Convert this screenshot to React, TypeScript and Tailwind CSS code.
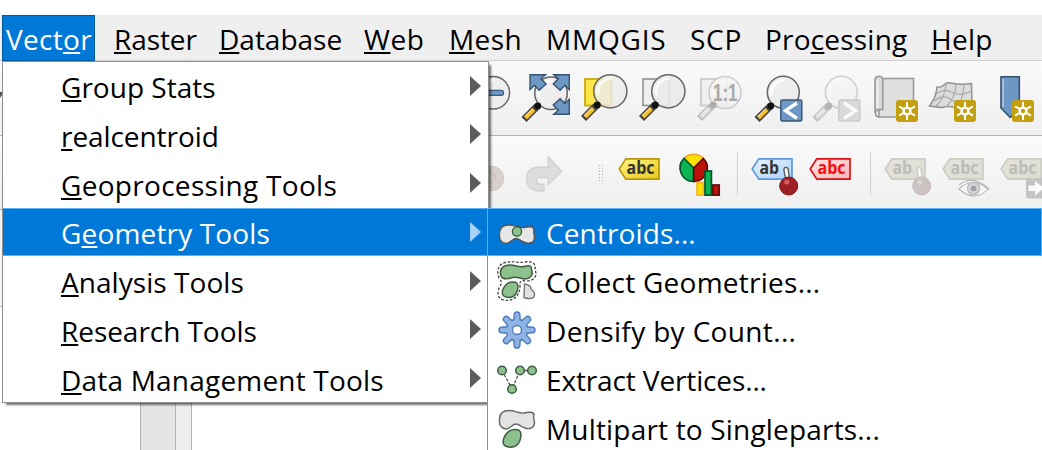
import type { ReactNode } from "react";

const FONT = "font-['Open_Sans','Noto_Sans',sans-serif]";

/** Renders a label with its mnemonic letter underlined. */
function Label({ text, mnemonic = -1 }: { text: string; mnemonic?: number }) {
  if (mnemonic < 0) return <>{text}</>;
  return (
    <>
      {text.slice(0, mnemonic)}
      <span className="underline decoration-2 underline-offset-[2px] [text-decoration-skip-ink:none]">{text[mnemonic]}</span>
      {text.slice(mnemonic + 1)}
    </>
  );
}

function Icon({ children }: { children: ReactNode }) {
  return (
    <svg viewBox="0 0 48 48" className="h-12 w-12 shrink-0 overflow-visible">
      {children}
    </svg>
  );
}

function Handle({ dx = 0, dy = 0 }: { dx?: number; dy?: number }) {
  return (
    <g transform={`translate(${dx} ${dy})`}>
      <path d="M17 31 3.5 44.5" stroke="#424242" strokeWidth="7" fill="none" />
      <path d="M13.5 34.5 5 43" stroke="#f3bd2d" strokeWidth="4" fill="none" />
      <path d="M12.2 33.8 4.4 41.6" stroke="#ffe384" strokeWidth="1.2" fill="none" />
      <circle cx="17.3" cy="31" r="3.4" fill="#111" />
    </g>
  );
}

function Lens({ cx, cy, r, opacity = 0.82 }: { cx: number; cy: number; r: number; opacity?: number }) {
  return (
    <g>
      <circle cx={cx} cy={cy} r={r} fill="#ebebeb" fillOpacity={opacity} stroke="#666" strokeWidth="1.5" />
      <path
        d={`M${cx - r * 0.72} ${cy + r * 0.15}A${r * 0.75} ${r * 0.75} 0 0 1 ${cx} ${cy - r * 0.75}`}
        stroke="#fff"
        strokeWidth="3"
        strokeLinecap="round"
        fill="none"
        opacity=".75"
      />
    </g>
  );
}

function ZoomOut() {
  return (
    <Icon>
      <Lens cx={29.3} cy={18.7} r={16.3} />
      <rect x="19" y="16.3" width="20.5" height="5" rx="2" fill="#6d97c4" stroke="#3a5a80" strokeWidth="1.2" />
    </Icon>
  );
}

function ZoomFull() {
  const arrow = "M.8 .8H17.5L12.6 5.2 18 10.8 10.6 17.4 5.5 12.2.8 16.8Z";
  return (
    <Icon>
      <Lens cx={29} cy={19.3} r={16.3} />
      <Handle dx={-1.5} dy={1} />
      <g fill="#6d97c4" stroke="#35526f" strokeWidth="1.5">
        <path d={arrow} transform="translate(7.3 0) scale(.93)" />
        <path d={arrow} transform="translate(48 0) scale(-.93 .93)" />
        <path d={arrow} transform="translate(48 41) scale(-.93 -.93)" />
      </g>
    </Icon>
  );
}

function ZoomSelection() {
  return (
    <Icon>
      <rect x="5" y="5" width="26.5" height="26.5" fill="#fce74a" stroke="#cca70e" strokeWidth="1.8" />
      <Lens cx={30.3} cy={17.3} r={16.6} />
      <Handle />
    </Icon>
  );
}

function ZoomLayer() {
  return (
    <Icon>
      <rect x="5" y="5" width="26.5" height="26.5" fill="#efefef" stroke="#8c8c8c" strokeWidth="1.5" />
      <Lens cx={30.3} cy={17.3} r={16.6} opacity={0.88} />
      <Handle />
    </Icon>
  );
}

function ZoomNative() {
  return (
    <Icon>
      <g opacity=".3" className="grayscale">
        <rect x="5" y="5" width="26.5" height="26.5" fill="#e4e4e4" stroke="#777" strokeWidth="2" />
        <Lens cx={29} cy={18.6} r={16} />
        <Handle />
      </g>
      <text x="17" y="27" textLength="24.5" lengthAdjust="spacingAndGlyphs" fontSize="23" fontWeight="700" fill="#a9a9a9" className="font-['Liberation_Sans',sans-serif]">
        1:1
      </text>
    </Icon>
  );
}

function ZoomLast() {
  return (
    <Icon>
      <Lens cx={29.3} cy={18.3} r={16} />
      <Handle dx={-0.5} dy={1} />
      <rect x="26.8" y="26" width="21" height="21" rx="1.5" fill="#6d97c4" stroke="#3d5872" strokeWidth="1.5" />
      <path d="M43 29 31.5 36.7 43 44.4" fill="none" stroke="#fff" strokeWidth="3.4" />
    </Icon>
  );
}

function ZoomNext() {
  return (
    <Icon>
      <g opacity=".27" className="grayscale">
        <Lens cx={29.3} cy={18.3} r={16} />
        <Handle dx={-0.5} dy={1} />
      </g>
      <rect x="26.8" y="26" width="21" height="21" rx="1.5" fill="#d9d9d9" stroke="#cacaca" strokeWidth="1.5" />
      <path d="M32 29 43.5 36.7 32 44.4" fill="none" stroke="#fafafa" strokeWidth="3.4" />
    </Icon>
  );
}

function NewBadge() {
  return (
    <g>
      <rect x="26" y="26" width="22" height="22" rx="3" fill="#c3a010" />
      <path d="M37 28.7V45.3M29.8 32.8 44.2 41.2M44.2 32.8 29.8 41.2" stroke="#fff" strokeWidth="2" strokeLinecap="round" />
      <circle cx="37" cy="37" r="4.6" fill="#fff" />
      <circle cx="37" cy="37" r="2.2" fill="#c3a010" />
    </g>
  );
}

function NewMapView() {
  return (
    <Icon>
      <path d="M11 4.5H43.5V43H9V38Z" fill="#e0e0e0" stroke="#999" strokeWidth="1.6" />
      <path d="M5 39V6Q5 2.3 9 2.3 12.8 2.3 12.8 6V35.5Q5.5 34.5 5.5 39.5 5.5 43 10 43" fill="#d9d9d9" stroke="#999" strokeWidth="1.6" />
      <path d="M7.5 34V6.5" stroke="#f4f4f4" strokeWidth="1.6" />
      <NewBadge />
    </Icon>
  );
}

function New3DView() {
  return (
    <Icon>
      <path d="M9 13Q13 14 17 10 20 8 24 9.3 33 11 43.5 9.5L44 36Q38 38 30 35 22 31 14 33.5 8 33 1.5 32 8 24 9 13Z" fill="#dcdcdc" stroke="#929292" strokeWidth="1.5" />
      <path d="M18 10Q17 24 8 32M28 10Q28 23 18 33M36 10Q36 22 29 35M8 20Q17 14 23 18 31 23 44 17M6 27Q15 20 22 25 31 31 44 26" fill="none" stroke="#a7a7a7" strokeWidth="1.1" />
      <NewBadge />
    </Icon>
  );
}

function NewBookmark() {
  return (
    <Icon>
      <path d="M15 2.8H33.3V36L24.2 43.5 15 34Z" fill="#6d97c4" stroke="#35526f" strokeWidth="1.6" />
      <path d="M17 5V33" stroke="#b5cfeb" strokeWidth="1.6" />
      <NewBadge />
    </Icon>
  );
}

function Redo() {
  return (
    <Icon>
      <path d="M28.2 5.5 41.5 20.5 28.2 33.5V26.5H20Q16.5 26.5 16.5 29.5 16.5 33 21.5 33.3H24V40H19Q6.5 39 6.5 27 7 17 18 16.3H28.2Z" fill="#dcdedd" stroke="#d0d2d1" strokeWidth="1.4" strokeLinejoin="round" />
    </Icon>
  );
}

function Undo() {
  return (
    <Icon>
      <circle cx="29.5" cy="27.5" r="12.3" fill="#d9d1ce" stroke="#d0c8c5" />
      <circle cx="28.5" cy="27" r="5" fill="none" stroke="#cdc4c1" strokeWidth="1.3" />
    </Icon>
  );
}

type TagProps = { fill: string; light: string; stroke: string; ink: string; text?: string; id: string };

function Tag({ fill, light, stroke, ink, text = "abc", id }: TagProps) {
  return (
    <g>
      <defs>
        <linearGradient id={id} x1="0" y1="0" x2="1" y2="1">
          <stop offset="0" stopColor={light} />
          <stop offset="1" stopColor={fill} />
        </linearGradient>
      </defs>
      <path d="M4.2 18 10.8 7.8H44V28.2H10.8Z" fill={`url(#${id})`} stroke={stroke} strokeWidth="1.7" />
      <text x="11.5" y="23.4" textLength={text.length === 3 ? 28 : 19.5} lengthAdjust="spacingAndGlyphs" fontSize="17" fontWeight="700" fill={ink} className="font-['Open_Sans',sans-serif]">
        {text}
      </text>
    </g>
  );
}

const MUTED_TAG = { fill: "#dcdcd3", light: "#e4e4dc", stroke: "#ccccc2", ink: "#bcbcb8" };

function Pin({ muted = false }: { muted?: boolean }) {
  return (
    <g>
      <path d="M36 20Q35.6 16.3 38 16.3 40 16.3 40.3 19L41.3 27H37.5Z" fill="#f7f7f7" stroke={muted ? "#c8c8c8" : "#555"} strokeWidth="1.3" />
      <circle cx="40.7" cy="35" r="9" fill={muted ? "#cdc3c3" : "#9f2024"} stroke={muted ? "#c5bbbb" : "#7d1518"} />
      <circle cx="38.8" cy="31" r="2.6" fill={muted ? "#ddd5d5" : "#d65b5b"} />
    </g>
  );
}

function Diagram() {
  return (
    <Icon>
      <g strokeWidth="1.7">
        <path d="M20.7 17 11 7.3A13.6 13.6 0 0 1 30.4 7.3Z" fill="#ffdf00" stroke="#f3a51b" />
        <path d="M20.7 17V30.5A13.5 13.5 0 0 1 11 7.5Z" fill="#0ab353" stroke="#06512a" />
        <path d="M20.7 17V30.5A13.5 13.5 0 0 0 30.4 7.5Z" fill="#bd1209" stroke="#630a08" />
        <rect x="24" y="31.5" width="6.5" height="12.6" fill="#ffdf00" stroke="#f8b52c" />
        <rect x="39.8" y="34" width="6.4" height="10.1" fill="#bd1209" stroke="#630a08" />
        <rect x="32" y="20" width="6.4" height="24.1" fill="#0ab353" stroke="#06512a" />
      </g>
    </Icon>
  );
}

function EyeMark() {
  return (
    <g fill="none" stroke="#b5b5b5" strokeWidth="1.1">
      <path d="M20 38Q33 25 49 38 36 52 20 38Z" fill="#f5f5f5" />
      <path d="M20 34Q34 23 50.5 38.5" />
      <circle cx="34.5" cy="37.5" r="6" fill="#d2d4d8" />
      <circle cx="34.5" cy="37.5" r="2.7" fill="#9b9da3" stroke="none" />
    </g>
  );
}

function MoveMark() {
  return (
    <g>
      <rect x="29" y="27" width="21" height="20.5" rx="2.5" fill="#c4c4c4" />
      <path d="M31.5 34.5H38V30L47 37.2 38 44.5V40H31.5Z" fill="#fafafa" />
    </g>
  );
}

const Separator = () => <div className="-mt-[4px] h-[43px] w-px shrink-0 bg-[#cfcfcf]" />;

function Grip() {
  return (
    <div className="-mt-[4px] grid shrink-0 grid-cols-2 gap-x-[2px] gap-y-[2px]">
      {Array.from({ length: 12 }, (_, i) => (
        <div key={i} className="h-px w-px bg-[#b0b0b0]" />
      ))}
    </div>
  );
}

const BLOB =
  "M2.5 20C3 14 6 12 12 12 18 12 22 15.5 27 14.5 31 13.5 37 13 37 16.5 36 19 37.5 21 37.5 25 37 30 32 31 28 29.5 24 28.5 22 25.5 19.5 25.5 15 25.5 14 30 9 30.5 3 30 2 25 2.5 20Z";

function SubIcon({ children }: { children: ReactNode }) {
  return (
    <svg viewBox="0 0 40 40" className="mr-[9px] h-10 w-10 shrink-0 overflow-visible">
      {children}
    </svg>
  );
}

function Centroid() {
  return (
    <SubIcon>
      <path d={BLOB} transform="translate(0 1)" fill="#e6e6e6" stroke="#555" strokeWidth="1.4" />
      <circle cx="20" cy="19.5" r="4.6" fill="#8cc08c" stroke="#355a37" strokeWidth="1.3" />
    </SubIcon>
  );
}

const LOBE = "M13 21C20 20 22 22 21 28 20 35 15 38 10 37 3 36 4 31 6 27 8 24 9 22 13 21Z";

function Collect() {
  return (
    <SubIcon>
      <path d="M2 17C-1 9 2 3 8 1.5 17-.5 21 2.5 28 1 37-.5 39 4 38 9 41 15 37 20 29 20 22 19 23 21 23 27 22 36 15 41 7 39 0 38 .5 32 2 27 6 21 4 20 2 17Z" fill="none" stroke="#444" strokeWidth="1.3" strokeDasharray="2.6 1.7" />
      <path d="M3.5 11C4 5 8 4 13 4 19 4 21 7 27 5.5 33 4 35 5 34.5 9 37 14 33 18 27 18 22 16.5 17 15 14 17 7 19 3 17 3.5 11Z" fill="#8cc08c" stroke="#3f5c42" strokeWidth="1.5" />
      <path d={LOBE} transform="translate(1 1.5) scale(.94)" fill="#8cc08c" stroke="#3f5c42" strokeWidth="1.5" />
      <path d="M27.5 23Q34 24 34 28 39 32 37 36 34 39 27 36.5Z" fill="#e1e1e1" stroke="#777" strokeWidth="1.4" />
    </SubIcon>
  );
}

function Gear() {
  const teeth = [0, 45, 90, 135, 180, 225, 270, 315];
  const tooth = "M16.8 11 17.2 4Q17.6 2 20 2 22.4 2 22.8 4L23.2 11";
  return (
    <SubIcon>
      <g fill="#8fb4e3" stroke="#4a7abb" strokeWidth="1.4">
        <circle cx="20" cy="20" r="10.8" />
        {teeth.map((a) => (
          <path key={a} d={tooth} transform={`rotate(${a} 20 20)`} />
        ))}
      </g>
      <circle cx="20" cy="20" r="10" fill="#8fb4e3" />
      <circle cx="20" cy="20" r="4.5" fill="#fff" stroke="#4a7abb" strokeWidth="1.3" />
    </SubIcon>
  );
}

function Vertices() {
  return (
    <SubIcon>
      <path d="M5 11.5 15 30 23 11.5H35" fill="none" stroke="#555" strokeWidth="1.3" strokeDasharray="3 1.6" />
      <g fill="#8cc08c" stroke="#3f5c42" strokeWidth="1.5">
        <circle cx="5" cy="11.5" r="4.3" />
        <circle cx="23" cy="11.5" r="4.3" />
        <circle cx="35" cy="11.5" r="4.3" />
        <circle cx="15" cy="30" r="4.3" />
      </g>
    </SubIcon>
  );
}

function Multipart() {
  return (
    <SubIcon>
      <path d={BLOB} transform="translate(0 -9.5)" fill="#e3e3e3" stroke="#666" strokeWidth="1.4" />
      <path d={LOBE} transform="translate(1.2 -.6) scale(1.07)" fill="#8cc08c" stroke="#3f5c42" strokeWidth="1.4" />
    </SubIcon>
  );
}

const MENU_BAR = [
  { text: "Raster", mnemonic: 0, box: "w-[105px]", type: "tracking-[-0.1px]" },
  { text: "Database", mnemonic: 0, box: "w-[145px]", type: "tracking-normal" },
  { text: "Web", mnemonic: 0, box: "w-[85px]", type: "tracking-[0.6px]" },
  { text: "Mesh", mnemonic: 0, box: "w-[97px]", type: "tracking-[0.4px]" },
  { text: "MMQGIS", mnemonic: -1, box: "w-[144px]", type: "tracking-[0.8px]" },
  { text: "SCP", mnemonic: -1, box: "w-[75px]", type: "tracking-[0.7px]" },
  { text: "Processing", mnemonic: 3, box: "w-[166px]", type: "tracking-[0.2px]" },
  { text: "Help", mnemonic: 0, box: "w-[100px]", type: "tracking-[0.3px]" },
];

const VECTOR_MENU = [
  { text: "Group Stats", mnemonic: 0, type: "tracking-[0.02px]" },
  { text: "realcentroid", mnemonic: 0, type: "tracking-[-0.07px]" },
  { text: "Geoprocessing Tools", mnemonic: 0, type: "tracking-[0.3px]" },
  { text: "Geometry Tools", mnemonic: 1, type: "tracking-[0.16px]", active: true },
  { text: "Analysis Tools", mnemonic: 0, type: "tracking-[0.05px]" },
  { text: "Research Tools", mnemonic: 0, type: "tracking-[-0.05px]" },
  { text: "Data Management Tools", mnemonic: 0, type: "tracking-[0.2px]" },
];

const GEOMETRY_MENU = [
  { text: "Centroids...", icon: <Centroid />, type: "tracking-[0.12px]", active: true },
  { text: "Collect Geometries...", icon: <Collect />, type: "tracking-[0.25px]" },
  { text: "Densify by Count...", icon: <Gear />, type: "tracking-[0.35px]" },
  { text: "Extract Vertices...", icon: <Vertices />, type: "tracking-[-0.13px]" },
  { text: "Multipart to Singleparts...", icon: <Multipart />, type: "tracking-[0.18px]" },
];

export default function App() {
  return (
    <div className={`relative flex h-[450px] w-[1042px] flex-col overflow-hidden bg-white pt-[15px] text-[28px] leading-[32px] whitespace-nowrap text-black ${FONT}`}>
      <nav className="flex h-[46px] shrink-0 border-b border-[#d0d0d0] bg-[#efefef] pl-[2px]">
        <div className="mr-[19px] flex h-[46px] w-[93px] shrink-0 items-center border border-[#005a9e] bg-[#0078d7] pt-[1px] pl-[3px] text-white">
          <span className="tracking-[0.3px]">
            <Label text="Vector" mnemonic={4} />
          </span>
        </div>
        {MENU_BAR.map((m) => (
          <div key={m.text} className={`flex shrink-0 items-center pt-[2px] ${m.box}`}>
            <span className={m.type}>
              <Label text={m.text} mnemonic={m.mnemonic} />
            </span>
          </div>
        ))}
      </nav>

      <div className="flex h-[75px] shrink-0 items-center gap-[10px] border-b border-[#b4b4b4] bg-linear-to-b from-[#fafafa] to-[#efefef] pl-[464px]">
        <ZoomOut />
        <ZoomFull />
        <ZoomSelection />
        <ZoomLayer />
        <ZoomNative />
        <ZoomLast />
        <ZoomNext />
        <NewMapView />
        <New3DView />
        <NewBookmark />
      </div>

      <div className="flex h-[74px] shrink-0 items-center border-b border-[#b4b4b4] bg-linear-to-b from-[#fafafa] to-[#efefef] pt-[5px] pl-[462px]">
        <div className="flex shrink-0 gap-[10px]">
          <Undo />
          <Redo />
        </div>
        <div className="ml-[31px] flex w-[16px] shrink-0">
          <Grip />
        </div>
        <div className="flex shrink-0 items-center gap-[10px]">
          <Icon>
            <Tag id="tag-yellow" light="#fff48a" fill="#e9c916" stroke="#bb970b" ink="#333" />
          </Icon>
          <Diagram />
        </div>
        <div className="ml-[16px] flex shrink-0 items-center gap-[10px]">
          <Separator />
          <Icon>
            <Tag id="tag-blue" light="#eaf5ff" fill="#a9d0fa" stroke="#5f98de" ink="#333" text="ab" />
            <Pin />
          </Icon>
          <Icon>
            <Tag id="tag-red" light="#ffe9e9" fill="#ffb4b4" stroke="#dd1111" ink="#f01010" />
          </Icon>
        </div>
        <div className="ml-[16px] flex shrink-0 items-center gap-[10px]">
          <Separator />
          <Icon>
            <Tag id="tag-pin" {...MUTED_TAG} text="ab" />
            <Pin muted />
          </Icon>
          <Icon>
            <Tag id="tag-eye" {...MUTED_TAG} />
            <EyeMark />
          </Icon>
          <Icon>
            <Tag id="tag-move" {...MUTED_TAG} />
            <MoveMark />
          </Icon>
        </div>
      </div>

      <main className="flex flex-1">
        <div className="flex w-[140px] flex-col">
          <div className="h-[97px] border-b border-[#b4b4b4] bg-[#f3f3f3]" />
        </div>
        <div className="w-[36px] border-x border-[#b4b4b4] bg-[#e4e4e4]" />
        <div className="w-[16px] border-r border-[#b4b4b4] bg-[#efefef]" />
      </main>

      <div className="absolute top-[61px] left-[2px] h-[342px] w-[487px] overflow-hidden border border-[#8f8f8f] bg-white shadow-[3px_3px_2px_-1px_rgba(0,0,0,0.55)]">
        {VECTOR_MENU.map((m) => (
          <div key={m.text} className="flex h-[48.8px] items-start">
            <div className={`flex h-12 w-full items-center justify-between pr-[7px] pl-[58px] ${m.active ? "border-y border-[#55b0f5] bg-[#0078d7] text-white" : ""}`}>
              <span className={`pt-[2px] ${m.type}`}>
                <Label text={m.text} mnemonic={m.mnemonic} />
              </span>
              <svg viewBox="0 0 11 20" className={`mb-[1px] h-5 w-[11px] ${m.active ? "fill-[#a6d1f5]" : "fill-[#5c5c5c]"}`}>
                <path d="M0 0 11 10 0 20Z" />
              </svg>
            </div>
          </div>
        ))}
      </div>

      <div className="absolute top-[208px] left-[487px] h-[250px] w-[560px] border-l border-[#8f8f8f] bg-white">
        {GEOMETRY_MENU.map((m) => (
          <div key={m.text} className="flex h-[48.9px] items-start">
            <div className={`flex h-12 w-[555px] items-center pl-[9px] ${m.active ? "-ml-px border border-[#55b0f5] bg-[#0078d7] text-white" : ""}`}>
              {m.icon}
              <span className={`pt-[2px] ${m.type}`}>{m.text}</span>
            </div>
          </div>
        ))}
      </div>

      <svg viewBox="0 0 2 6" className="absolute top-[92px] left-0 h-[6px] w-[2px]">
        <path d="M0 0H2V3L0 6Z" fill="#555" />
      </svg>
    </div>
  );
}
